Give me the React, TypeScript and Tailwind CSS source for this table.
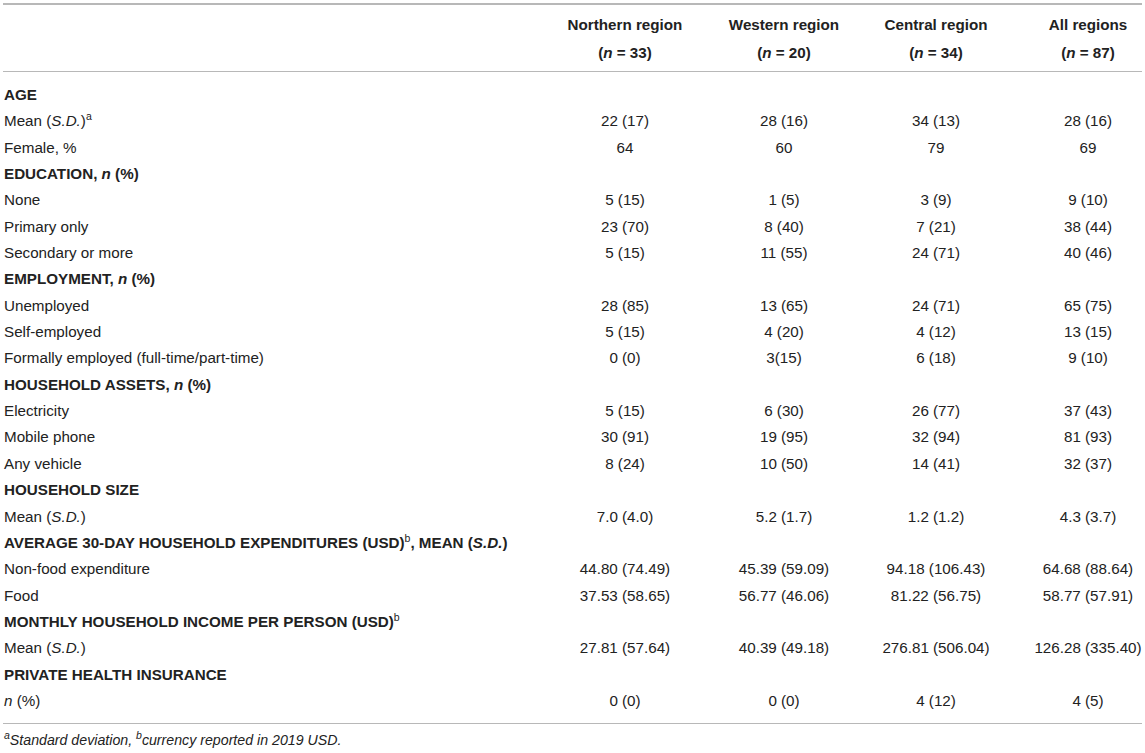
import React from "react";

type Row =
  | { kind: "section"; label: React.ReactNode }
  | { kind: "data"; label: React.ReactNode; values: string[] };

const SD = <i>S.D.</i>;
const N = <i>n</i>;
const Sup = ({ children }: { children: React.ReactNode }) => (
  <sup className="text-[10.5px] font-normal -top-[0.6em]">{children}</sup>
);

const rows: Row[] = [
  { kind: "section", label: "AGE" },
  { kind: "data", label: <>Mean ({SD})<Sup>a</Sup></>, values: ["22 (17)", "28 (16)", "34 (13)", "28 (16)"] },
  { kind: "data", label: "Female, %", values: ["64", "60", "79", "69"] },
  { kind: "section", label: <>EDUCATION, {N} (%)</> },
  { kind: "data", label: "None", values: ["5 (15)", "1 (5)", "3 (9)", "9 (10)"] },
  { kind: "data", label: "Primary only", values: ["23 (70)", "8 (40)", "7 (21)", "38 (44)"] },
  { kind: "data", label: "Secondary or more", values: ["5 (15)", "11 (55)", "24 (71)", "40 (46)"] },
  { kind: "section", label: <>EMPLOYMENT, {N} (%)</> },
  { kind: "data", label: "Unemployed", values: ["28 (85)", "13 (65)", "24 (71)", "65 (75)"] },
  { kind: "data", label: "Self-employed", values: ["5 (15)", "4 (20)", "4 (12)", "13 (15)"] },
  { kind: "data", label: "Formally employed (full-time/part-time)", values: ["0 (0)", "3(15)", "6 (18)", "9 (10)"] },
  { kind: "section", label: <>HOUSEHOLD ASSETS, {N} (%)</> },
  { kind: "data", label: "Electricity", values: ["5 (15)", "6 (30)", "26 (77)", "37 (43)"] },
  { kind: "data", label: "Mobile phone", values: ["30 (91)", "19 (95)", "32 (94)", "81 (93)"] },
  { kind: "data", label: "Any vehicle", values: ["8 (24)", "10 (50)", "14 (41)", "32 (37)"] },
  { kind: "section", label: "HOUSEHOLD SIZE" },
  { kind: "data", label: <>Mean ({SD})</>, values: ["7.0 (4.0)", "5.2 (1.7)", "1.2 (1.2)", "4.3 (3.7)"] },
  { kind: "section", label: <>AVERAGE 30-DAY HOUSEHOLD EXPENDITURES (USD)<Sup>b</Sup>, MEAN ({SD})</> },
  { kind: "data", label: "Non-food expenditure", values: ["44.80 (74.49)", "45.39 (59.09)", "94.18 (106.43)", "64.68 (88.64)"] },
  { kind: "data", label: "Food", values: ["37.53 (58.65)", "56.77 (46.06)", "81.22 (56.75)", "58.77 (57.91)"] },
  { kind: "section", label: <>MONTHLY HOUSEHOLD INCOME PER PERSON (USD)<Sup>b</Sup></> },
  { kind: "data", label: <>Mean ({SD})</>, values: ["27.81 (57.64)", "40.39 (49.18)", "276.81 (506.04)", "126.28 (335.40)"] },
  { kind: "section", label: "PRIVATE HEALTH INSURANCE" },
  { kind: "data", label: <>{N} (%)</>, values: ["0 (0)", "0 (0)", "4 (12)", "4 (5)"] },
];

const cols = "grid grid-cols-[545px_154px_164px_140px_1fr]";

const headers = [
  ["Northern region", "33"],
  ["Western region", "20"],
  ["Central region", "34"],
  ["All regions", "87"],
];

export default function App() {
  return (
    <div className="bg-white w-[1145px] h-[753px] px-[3px] text-[#222] font-['Liberation_Sans',Arial,sans-serif] text-[15.2px]">
      <div className="h-[3px]" />
      <div className="border-t-2 border-[#b8b8b8]">
        <div className={`${cols} border-b border-[#b8b8b8] pt-[6px] pb-[4px] leading-[28px] font-bold`}>
          <div />
          {headers.map(([name, n], i) => (
            <div key={name} className={`text-center ${i === 3 ? "pl-7" : ""}`}>
              <div>{name}</div>
              <div>
                (<i>n</i> = {n})
              </div>
            </div>
          ))}
        </div>

        <div className="pt-[10px] pb-[9px] border-b border-[#b8b8b8]">
          {rows.map((row, idx) =>
            row.kind === "section" ? (
              <div key={idx} className="h-[26.35px] leading-[26.35px] pl-[1px] font-bold whitespace-nowrap">
                {row.label}
              </div>
            ) : (
              <div key={idx} className={`${cols} h-[26.35px] leading-[26.35px]`}>
                <div className="pl-[1px] whitespace-nowrap">{row.label}</div>
                {row.values.map((v, i) => (
                  <div key={i} className={`text-center whitespace-nowrap ${i === 3 ? "pl-7" : ""}`}>
                    {v}
                  </div>
                ))}
              </div>
            )
          )}
        </div>

        <p className="pt-[7px] pl-[1px] italic text-[14.2px] leading-[18px]">
          <Sup>a</Sup>Standard deviation, <Sup>b</Sup>currency reported in 2019 USD.
        </p>
      </div>
    </div>
  );
}
